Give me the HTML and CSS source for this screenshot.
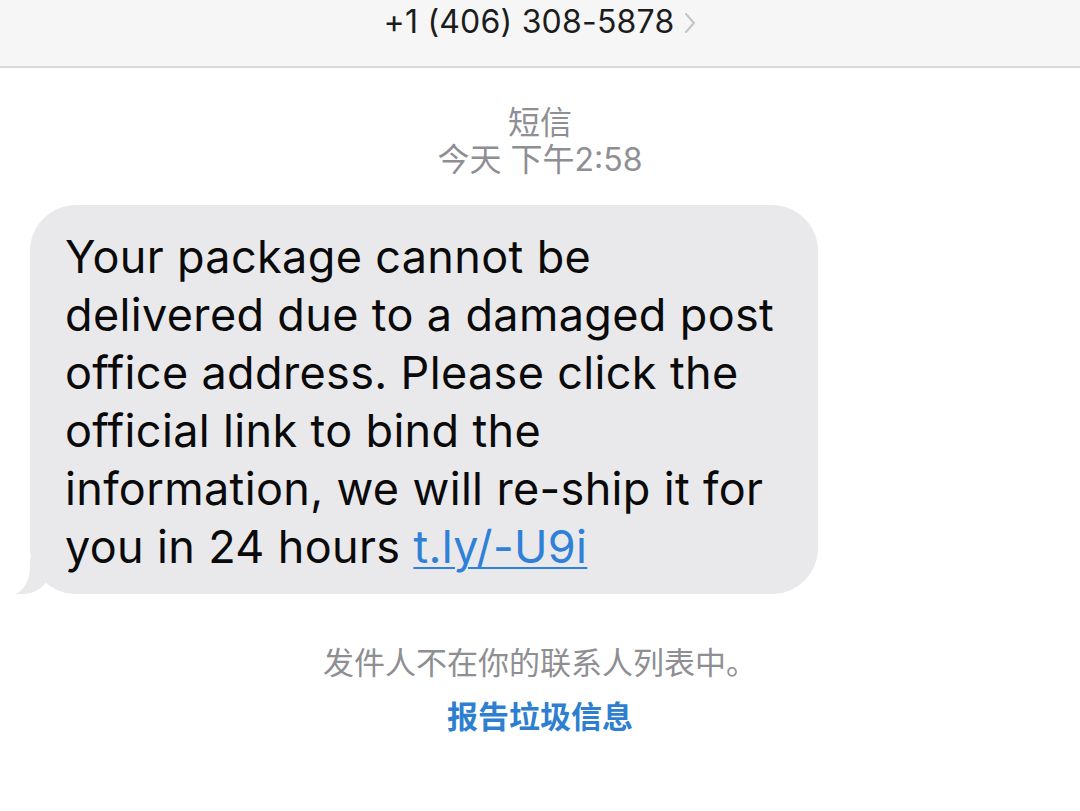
FILE: index.html
```html
<!DOCTYPE html>
<html lang="zh">
<head>
    <meta charset="UTF-8">
    <meta name="viewport" content="width=device-width, initial-scale=1.0">
    <title>+1 (406) 308-5878</title>
    <link rel="stylesheet" href="styles.css">
</head>
<body>
    <div class="header">
        <span class="contact">+1 (406) 308-5878</span>
        <svg class="chevron" width="12" height="22" viewBox="0 0 12 22">
            <path d="M2 2 L10 11 L2 20" fill="none" stroke="#c4c4c6" stroke-width="2" stroke-linecap="round" stroke-linejoin="round"/>
        </svg>
    </div>

    <div class="thread">
        <div class="meta">
            <div class="service">短信</div>
            <div class="time">今天 下午2:58</div>
        </div>

        <div class="bubble-row">
            <div class="bubble">
                Your package cannot be<br>
                delivered due to a damaged post<br>
                office address. Please click the<br>
                official link to bind the<br>
                information, we will re-ship it for<br>
                you in 24 hours <a href="#" class="link">t.ly/-U9i</a>
            </div>
        </div>

        <div class="notice">
            <div class="notice-text">发件人不在你的联系人列表中。</div>
            <div class="report">报告垃圾信息</div>
        </div>
    </div>
</body>
</html>
```

FILE: styles.css
```css
body {
    margin: 0;
    background: #fff;
    font-family: Inter, "Liberation Sans", "Noto Sans CJK SC", sans-serif;
}

.header {
    height: 66px;
    background: #f6f6f6;
    border-bottom: 2px solid #d9d9d9;
    display: flex;
    align-items: flex-start;
    justify-content: center;
    gap: 10px;
}

.contact {
    font-size: 32px;
    color: #1c1c1c;
    line-height: 44px;
    letter-spacing: 0.2px;
}

.chevron {
    margin-top: 12px;
}

.thread {
    padding-top: 36px;
}

.meta {
    text-align: center;
    color: #8e8e93;
    font-size: 32px;
    line-height: 37px;
}

.bubble-row {
    padding: 27px 0 0 30px;
}

.bubble {
    position: relative;
    box-sizing: border-box;
    width: 788px;
    background: #e9e9eb;
    border-radius: 46px;
    padding: 23px 20px 18px 35px;
    font-size: 45px;
    line-height: 58px;
    letter-spacing: 0.35px;
    color: #0a0a0a;
}

.bubble::before {
    content: "";
    position: absolute;
    left: -18px;
    bottom: 0;
    width: 42px;
    height: 36px;
    background: #e9e9eb;
    border-bottom-right-radius: 30px 36px;
}

.bubble::after {
    content: "";
    position: absolute;
    left: -32px;
    bottom: -1px;
    width: 32px;
    height: 40px;
    background: #fff;
    border-bottom-right-radius: 20px 28px;
}

.link {
    color: #2f80d8;
    text-decoration: underline;
    text-decoration-thickness: 2px;
    text-underline-offset: 4px;
}

.notice {
    text-align: center;
    padding-top: 42px;
    font-size: 31px;
    line-height: 54px;
}

.notice-text {
    color: #8e8e93;
}

.report {
    color: #2f7fd0;
    font-weight: bold;
}
```
